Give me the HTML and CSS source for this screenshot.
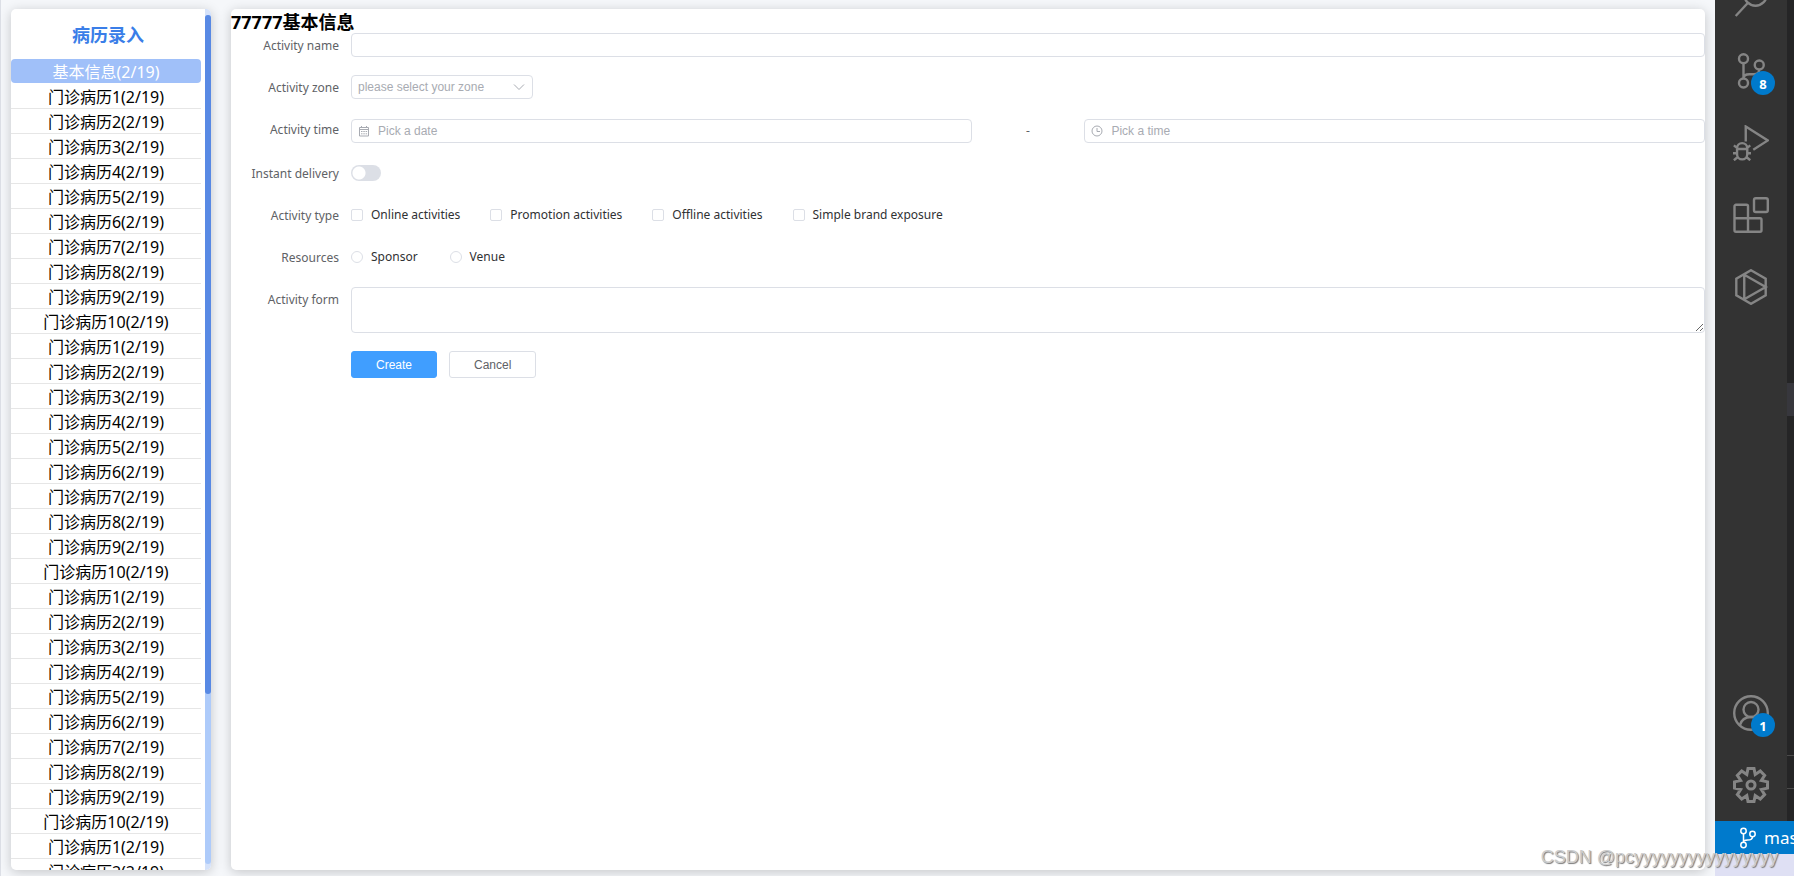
FILE: index.html
```html
<!DOCTYPE html>
<html lang="zh">
<head>
<meta charset="utf-8">
<title>病历录入</title>
<link rel="stylesheet" href="styles.css">
</head>
<body>
<div class="app">
  <aside class="sidebar card">
    <div class="sidebar-body">
      <h2 class="sidebar-title">病历录入</h2>
      <nav class="records">
        <a class="record active" href="#">基本信息(2/19)</a>
        <a class="record" href="#">门诊病历1(2/19)</a>
        <a class="record" href="#">门诊病历2(2/19)</a>
        <a class="record" href="#">门诊病历3(2/19)</a>
        <a class="record" href="#">门诊病历4(2/19)</a>
        <a class="record" href="#">门诊病历5(2/19)</a>
        <a class="record" href="#">门诊病历6(2/19)</a>
        <a class="record" href="#">门诊病历7(2/19)</a>
        <a class="record" href="#">门诊病历8(2/19)</a>
        <a class="record" href="#">门诊病历9(2/19)</a>
        <a class="record" href="#">门诊病历10(2/19)</a>
        <a class="record" href="#">门诊病历1(2/19)</a>
        <a class="record" href="#">门诊病历2(2/19)</a>
        <a class="record" href="#">门诊病历3(2/19)</a>
        <a class="record" href="#">门诊病历4(2/19)</a>
        <a class="record" href="#">门诊病历5(2/19)</a>
        <a class="record" href="#">门诊病历6(2/19)</a>
        <a class="record" href="#">门诊病历7(2/19)</a>
        <a class="record" href="#">门诊病历8(2/19)</a>
        <a class="record" href="#">门诊病历9(2/19)</a>
        <a class="record" href="#">门诊病历10(2/19)</a>
        <a class="record" href="#">门诊病历1(2/19)</a>
        <a class="record" href="#">门诊病历2(2/19)</a>
        <a class="record" href="#">门诊病历3(2/19)</a>
        <a class="record" href="#">门诊病历4(2/19)</a>
        <a class="record" href="#">门诊病历5(2/19)</a>
        <a class="record" href="#">门诊病历6(2/19)</a>
        <a class="record" href="#">门诊病历7(2/19)</a>
        <a class="record" href="#">门诊病历8(2/19)</a>
        <a class="record" href="#">门诊病历9(2/19)</a>
        <a class="record" href="#">门诊病历10(2/19)</a>
        <a class="record" href="#">门诊病历1(2/19)</a>
        <a class="record" href="#">门诊病历2(2/19)</a>
      </nav>
    </div>
    <div class="scrollbar"><div class="track"><div class="thumb"></div></div></div>
  </aside>

  <main class="content card">
    <h2 class="content-title">77777基本信息</h2>
    <form class="form">
      <div class="row">
        <label class="label" for="name">Activity name</label>
        <div class="field"><input class="input" id="name" type="text"></div>
      </div>
      <div class="row">
        <label class="label" for="zone">Activity zone</label>
        <div class="field">
          <div class="select-wrap">
            <select class="input select" id="zone"><option>please select your zone</option></select>
            <svg class="chevron" viewBox="0 0 12 12"><path d="M1 3.500l5 5 5-5"/></svg>
          </div>
        </div>
      </div>
      <div class="row">
        <label class="label" for="date">Activity time</label>
        <div class="field time-range">
          <div class="picker">
            <svg class="picker-icon" viewBox="0 0 12 12"><path d="M1.500 2.500h9v8.500h-9zM1.500 4.500h9M3.500 1v2M8.500 1v2M3 6.500h1.500M5.300 6.500h1.500M7.600 6.500h1.500M3 8.800h1.500M5.300 8.800h1.500M7.600 8.800h1.500"/></svg>
            <input class="input" id="date" type="text" placeholder="Pick a date">
          </div>
          <span class="dash">-</span>
          <div class="picker">
            <svg class="picker-icon" viewBox="0 0 12 12"><circle cx="6" cy="6" r="5"/><path d="M6 3v3.500h3"/></svg>
            <input class="input" type="text" placeholder="Pick a time" aria-label="Pick a time">
          </div>
        </div>
      </div>
      <div class="row">
        <label class="label" for="delivery">Instant delivery</label>
        <div class="field"><input class="switch" id="delivery" type="checkbox" role="switch"></div>
      </div>
      <div class="row">
        <span class="label">Activity type</span>
        <div class="field options">
          <label class="option"><input class="box" type="checkbox">Online activities</label>
          <label class="option"><input class="box" type="checkbox">Promotion activities</label>
          <label class="option"><input class="box" type="checkbox">Offline activities</label>
          <label class="option"><input class="box" type="checkbox">Simple brand exposure</label>
        </div>
      </div>
      <div class="row">
        <span class="label">Resources</span>
        <div class="field options radios">
          <label class="option"><input class="box round" type="radio" name="resource">Sponsor</label>
          <label class="option"><input class="box round" type="radio" name="resource">Venue</label>
        </div>
      </div>
      <div class="row">
        <label class="label" for="desc">Activity form</label>
        <div class="field"><textarea class="input textarea" id="desc"></textarea></div>
      </div>
      <div class="actions">
        <button class="button primary" type="button">Create</button>
        <button class="button" type="button">Cancel</button>
      </div>
    </form>
  </main>
</div>

<div class="editor">
  <div class="editor-top">
    <div class="activity-bar">
      <button class="tool first" aria-label="Search"><svg viewBox="0 0 24 24"><circle cx="15" cy="9" r="7.500"/><path d="M10 14.500L1.800 23.300"/></svg></button>
      <button class="tool" aria-label="Source control"><svg viewBox="0 0 24 24"><circle cx="7" cy="3.800" r="3"/><circle cx="17.500" cy="8" r="3"/><circle cx="7" cy="20" r="3"/><path d="M7 7v10M17.500 11c0 2-1.500 3.200-3.500 3.200h-3c-2.500 0-4 1-4 2.800"/></svg><span class="badge">8</span></button>
      <button class="tool" aria-label="Run and debug"><svg viewBox="0 0 24 24"><path d="M8.500 11V1L23.200 10.300 13.500 16.500"/><path d="M2.700 15.500a3.400 3.400 0 0 1 6.800 0v4a3.400 3.400 0 0 1-6.800 0zM2.700 16h6.800M0 18.800h2.700M9.500 18.800H12M.6 13.600l2.200 1.800M11.500 13.600l-2.200 1.800M.6 23.500l2.400-2M11.500 23.500l-2.400-2"/></svg></button>
      <button class="tool" aria-label="Extensions"><svg viewBox="0 0 24 24"><rect x="14" y=".8" width="9.200" height="9.200" rx="1.200"/><path d="M2 5.200h7a1 1 0 0 1 1 1v8h8a1 1 0 0 1 1 1v7a1 1 0 0 1-1 1H2a1 1 0 0 1-1-1v-16a1 1 0 0 1 1-1zM1 14.200h9v9"/></svg></button>
      <button class="tool" aria-label="Graph"><svg viewBox="0 0 24 24"><path d="M12 .8l9.800 5.600v11.200L12 23.200 2.200 17.600V6.400zM7.500 3.800v16.400M7.500 3.800L21.800 12 7.500 20.200"/></svg></button>
      <div class="spacer"></div>
      <button class="tool" aria-label="Account"><svg viewBox="0 0 24 24"><circle cx="12" cy="12" r="11.200"/><circle cx="12" cy="9.700" r="5"/><path d="M4.500 20.300c1-3.500 3.500-5.600 7.500-5.600s6.500 2.100 7.500 5.600"/></svg><span class="badge">1</span></button>
      <button class="tool" aria-label="Settings"><svg class="gear" viewBox="0 0 24 24"><path d="M10 1h4l.8 4 3.400-2.300 2.900 2.900L18.900 9l4.100.9v4.200l-4.100.9 2.200 3.400-2.900 2.900-3.400-2.300-.8 4h-4l-.8-4-3.400 2.300-2.900-2.900L5.100 15 1 14.100V9.900L5.100 9 2.900 5.600l2.900-2.900L9.200 5z"/><circle cx="12" cy="12" r="2.700"/></svg></button>
    </div>
    <div class="panel"><div class="panel-selected"></div><div class="panel-section"></div></div>
  </div>
  <div class="status-bar">
    <svg viewBox="0 0 16 22"><circle cx="4" cy="4" r="2.700"/><circle cx="13" cy="7" r="2.700"/><circle cx="4" cy="18" r="2.700"/><path d="M4 6.700v8.600M13 9.700c0 3-3 3.300-5 3.300-2.500 0-4 .5-4 2.300"/></svg>
    <span>master</span>
  </div>
  <div class="desktop"></div>
</div>
<div class="watermark">CSDN @pcyyyyyyyyyyyyyyyy</div>
</body>
</html>
```
FILE: styles.css
```css
* { box-sizing: border-box; }
body {
  margin: 0;
  height: 100vh;
  display: flex;
  overflow: hidden;
  position: relative;
  background: #f5f7fa;
  font-family: "Noto Sans", "Noto Sans CJK SC", sans-serif;
  font-size: 16px;
  color: #000;
}
h2 { margin: 0; font-size: 18px; }
.app {
  flex: 1;
  min-width: 0;
  display: flex;
  gap: 20px;
  padding: 9px 10px 6px;
  border-left: 1px solid #dcdfe6;
}
.card {
  background: #fff;
  border-radius: 5px;
  box-shadow: 0 2px 12px rgba(0, 0, 0, 0.2);
}
.sidebar { display: flex; width: 200px; overflow: hidden; }
.sidebar-body { flex: 1; overflow: hidden; }
.sidebar-title {
  height: 50px;
  line-height: 52px;
  text-align: center;
  color: #3a7ee8;
}
.records { padding-right: 4px; }
.record {
  display: block;
  height: 25px;
  line-height: 26px;
  border-bottom: 1px solid #e6e6e6;
  text-align: center;
  text-decoration: none;
  color: #000;
}
.record.active {
  height: 24px;
  margin-bottom: 1px;
  border: 0;
  border-radius: 4px;
  background: #a0c0f9;
  color: #fff;
}
.scrollbar { width: 6px; padding: 6px 0; background: #d5e2fa; }
.track { height: 100%; border-radius: 3px; background: #aecbfa; }
.thumb { height: 80%; border-radius: 3px; background: #5889e4; }

.content { flex: 1; min-width: 0; }
.content-title { height: 24px; line-height: 26px; }
.form {
  font-family: "Noto Sans", sans-serif;
  font-size: 12px;
  line-height: 24px;
}
.row { display: flex; margin-bottom: 18px; }
.label {
  width: 120px;
  padding: 1px 12px 0 0;
  margin-bottom: -1px;
  text-align: right;
  color: #606266;
}
.field { flex: 1; min-width: 0; display: flex; align-items: center; }
.input {
  display: block;
  width: 100%;
  height: 24px;
  padding: 0 7px;
  border: 1px solid #dcdfe6;
  border-radius: 4px;
  outline: 0;
  background: #fff;
  font: 12px "Liberation Sans", sans-serif;
  color: #606266;
}
.input::placeholder { color: #a8abb2; }
.select-wrap { position: relative; width: 182px; }
.select { appearance: none; padding: 0 6px; color: #a8abb2; }
.chevron, .picker-icon {
  position: absolute;
  width: 12px;
  height: 12px;
  top: 6px;
  fill: none;
  stroke: #a8abb2;
}
.chevron { right: 8px; }
.picker-icon { left: 7px; }
.time-range { padding-top: 2px; }
.picker { position: relative; flex: 11; }
.picker .input { padding-left: 26px; }
.dash { flex: 2; text-align: center; color: #606266; }
.switch {
  appearance: none;
  width: 30px;
  height: 16px;
  margin: 0;
  border-radius: 8px;
  background: radial-gradient(circle at 8px 8px, #fff 6px, #dcdfe6 7px);
}
.options { gap: 30px; }
.radios { gap: 32px; }
.option { display: flex; align-items: center; gap: 8px; color: #303133; }
.box {
  appearance: none;
  width: 12px;
  height: 12px;
  margin: 0;
  border: 1px solid #dcdfe6;
  border-radius: 2px;
  background: #fff;
}
.round { border-radius: 50%; }
.textarea { height: 46px; resize: vertical; }
.actions { display: flex; gap: 12px; padding-left: 120px; }
.button {
  height: 27px;
  padding: 0 24px;
  border: 1px solid #dcdfe6;
  border-radius: 3px;
  background: #fff;
  font: 12px "Liberation Sans", sans-serif;
  color: #606266;
}
.primary { border-color: #409eff; background: #409eff; color: #fff; }

.editor { width: 79px; display: flex; flex-direction: column; overflow: hidden; }
.editor-top { flex: 1; min-height: 0; display: flex; overflow: hidden; }
.activity-bar { width: 72px; display: flex; flex-direction: column; background: #333; }
.tool {
  position: relative;
  flex: none;
  height: 72px;
  padding: 18px;
  border: 0;
  background: none;
}
.tool.first { margin-top: -37px; }
.tool svg { display: block; width: 36px; height: 36px; fill: none; stroke: #858585; stroke-width: 1.6; }
.tool .gear { stroke-width: 2; }
.badge {
  position: absolute;
  right: 12px;
  bottom: 12px;
  width: 24px;
  height: 24px;
  border-radius: 50%;
  background: #007acc;
  color: #fff;
  font: bold 13px/26px "Noto Sans", sans-serif;
  text-align: center;
}
.spacer { flex: 1; }
.panel { flex: 1; display: flex; flex-direction: column; justify-content: space-between; background: #252526; }
.panel-selected { height: 33px; margin-top: 383px; background: #37373d; }
.panel-section { height: 34px; margin-bottom: 32px; border: 1px solid #4a4a4a; border-width: 1px 0; }
.status-bar {
  height: 33px;
  display: flex;
  align-items: center;
  gap: 8px;
  padding-left: 24px;
  background: #007acc;
  color: #fff;
  font-size: 17px;
}
.status-bar svg { flex: none; width: 17px; height: 22px; fill: none; stroke: #fff; stroke-width: 1.5; }
.desktop { height: 22px; background: #dfe0f4; }
.watermark {
  position: absolute;
  right: 16px;
  bottom: 8px;
  font: 18px/22px "Liberation Sans", sans-serif;
  color: #ccc;
  text-shadow: 1px 1px 1px #777;
}
```
